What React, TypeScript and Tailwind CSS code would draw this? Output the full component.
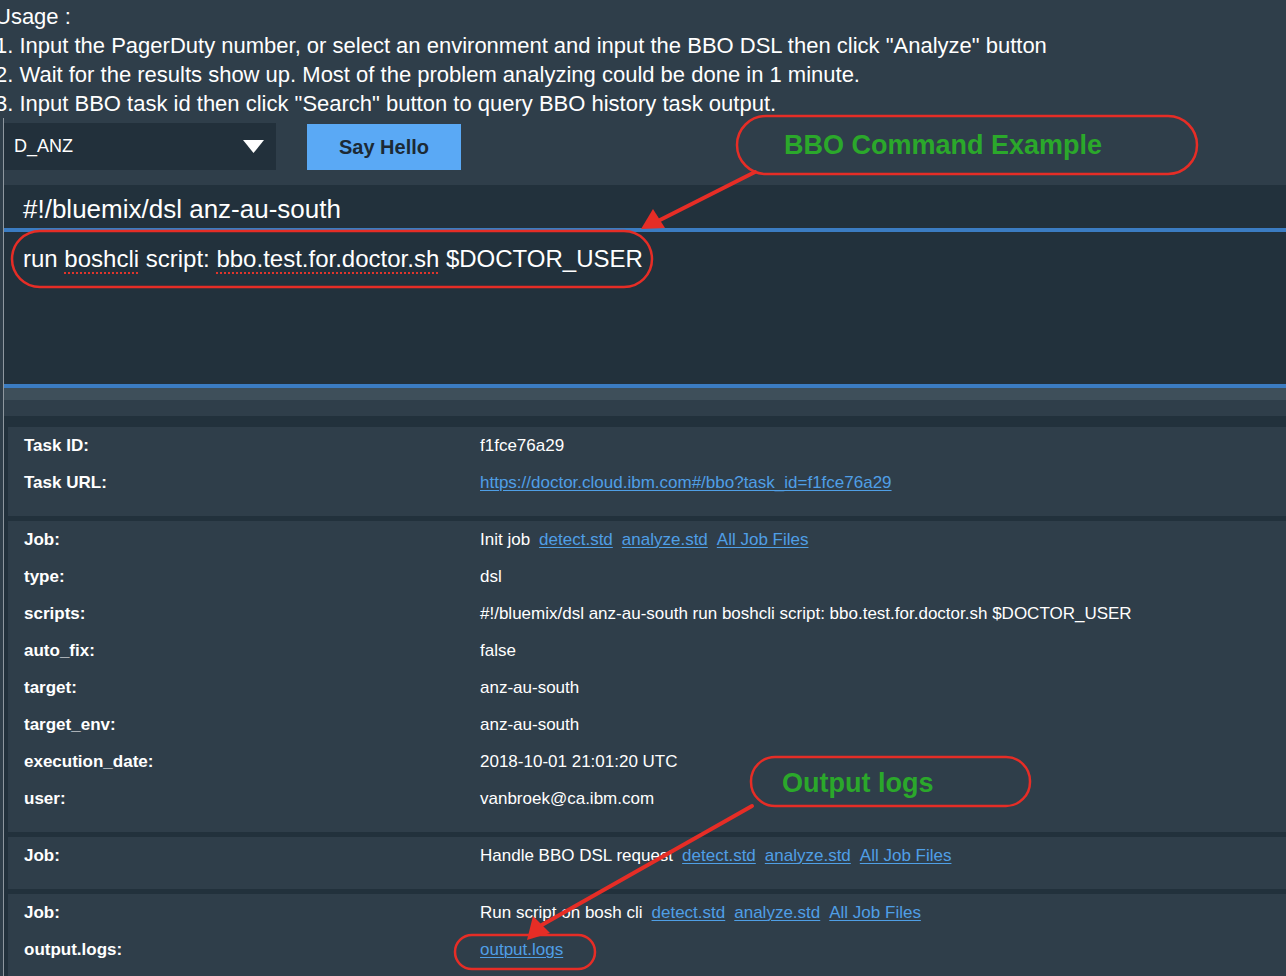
import React from "react";

type Row = {
  label: string;
  value: React.ReactNode;
};

const usage = [
  "Usage :",
  '1. Input the PagerDuty number, or select an environment and input the BBO DSL then click "Analyze" button',
  "2. Wait for the results show up. Most of the problem analyzing could be done in 1 minute.",
  '3. Input BBO task id then click "Search" button to query BBO history task output.',
];

const Link = ({ children }: { children: React.ReactNode }) => (
  <a className="text-[#4f9fe6] underline underline-offset-2 decoration-1">
    {children}
  </a>
);

// job row: text followed by the std file links
const JobValue = ({ name }: { name: string }) => (
  <div className="flex items-center gap-[9px]">
    <span>{name}</span>
    <Link>detect.std</Link>
    <Link>analyze.std</Link>
    <Link>All Job Files</Link>
  </div>
);

const panels: Row[][] = [
  [
    { label: "Task ID:", value: "f1fce76a29" },
    {
      label: "Task URL:",
      value: <Link>https://doctor.cloud.ibm.com#/bbo?task_id=f1fce76a29</Link>,
    },
  ],
  [
    { label: "Job:", value: <JobValue name="Init job" /> },
    { label: "type:", value: "dsl" },
    {
      label: "scripts:",
      value:
        "#!/bluemix/dsl anz-au-south run boshcli script: bbo.test.for.doctor.sh $DOCTOR_USER",
    },
    { label: "auto_fix:", value: "false" },
    { label: "target:", value: "anz-au-south" },
    { label: "target_env:", value: "anz-au-south" },
    { label: "execution_date:", value: "2018-10-01 21:01:20 UTC" },
    { label: "user:", value: "vanbroek@ca.ibm.com" },
  ],
  [{ label: "Job:", value: <JobValue name="Handle BBO DSL request" /> }],
  [
    { label: "Job:", value: <JobValue name="Run script on bosh cli" /> },
    { label: "output.logs:", value: <Link>output.logs</Link> },
  ],
];

const Spell = ({ children }: { children: React.ReactNode }) => (
  <span className="underline decoration-dotted decoration-[#e0352b] decoration-2 underline-offset-[5px]">
    {children}
  </span>
);

const Annotations = () => (
  <>
    <svg
      className="absolute inset-0 pointer-events-none"
      width={1286}
      height={976}
      viewBox="0 0 1286 976"
    >
      <g fill="none" stroke="#e62d26" strokeWidth={2.5}>
        <rect x={737} y={116} width={460} height={58} rx={29} />
        <rect x={12} y={231} width={640} height={56} rx={28} />
        <rect x={751} y={757} width={279} height={49} rx={24} />
        <rect x={455} y={935} width={140} height={34} rx={17} />
      </g>
      <g stroke="#e62d26" strokeWidth={4} strokeLinecap="round">
        <line x1={755} y1={172} x2={660} y2={220} />
        <line x1={752} y1={806} x2={540} y2={926} />
      </g>
      <g fill="#e62d26">
        <polygon points="641,229 653,209 665,228" />
        <polygon points="527,940 533,916 550,933" />
      </g>
    </svg>
    <div className="absolute left-[784px] top-[129px] text-[27px] leading-[32px] font-bold text-[#2ba82b]">
      BBO Command Example
    </div>
    <div className="absolute left-[782px] top-[767px] text-[27px] leading-[32px] font-bold text-[#2ba82b]">
      Output logs
    </div>
  </>
);

const App = () => {
  return (
    <div className="relative w-[1286px] h-[976px] overflow-hidden bg-[#2f3e4a] text-white font-['Liberation_Sans',Arial,sans-serif]">
      <div className="-ml-[5px] pt-[2px] text-[22px] leading-[29px]">
        {usage.map((line) => (
          <div key={line}>{line}</div>
        ))}
      </div>

      <div className="ml-[3px] border-l border-[#8e979f]">
        {/* env select + button */}
        <div className="flex items-center gap-[31px] pt-[5px]">
          <div className="w-[272px] h-[47px] bg-[#22303b] flex items-center justify-between pl-[10px] pr-[12px] text-[18px]">
            <span>D_ANZ</span>
            <svg width={21} height={13} viewBox="0 0 21 13">
              <polygon points="0,0 21,0 10.5,13" fill="#ffffff" />
            </svg>
          </div>
          <button className="w-[154px] h-[46px] bg-[#5aa9f5] text-[#1c2a35] text-[20px] font-bold">
            Say Hello
          </button>
        </div>

        {/* dsl editor */}
        <div className="mt-[15px] bg-[#22313c]">
          <div className="h-[43px] pt-[9px] pl-[19px] text-[26px] leading-[30px]">
            #!/bluemix/dsl anz-au-south
          </div>
          <div className="h-[4px] bg-[#3b7cc2]" />
          <div className="h-[152px] pt-[12px] pl-[19px] text-[24px] leading-[30px]">
            run <Spell>boshcli</Spell> script: <Spell>bbo.test.for.doctor.sh</Spell>{" "}
            $DOCTOR_USER
          </div>
          <div className="h-[4px] bg-[#3b7cc2]" />
          <div className="h-[12px] bg-[#3e4f5a]" />
        </div>

        <div className="h-[16px]" />

        {/* result table */}
        <div className="bg-[#22313c] pt-[11px] pl-[4px] flex flex-col gap-[5px]">
          {panels.map((rows, i) => (
            <div key={i} className="bg-[#2f3e4a] pl-[16px] pb-[15px]">
              {rows.map((row) => (
                <div key={row.label} className="flex items-center h-[37px] text-[17px]">
                  <div className="w-[456px] shrink-0 font-bold">{row.label}</div>
                  <div>{row.value}</div>
                </div>
              ))}
            </div>
          ))}
        </div>
      </div>

      <Annotations />
    </div>
  );
};

export default App;
